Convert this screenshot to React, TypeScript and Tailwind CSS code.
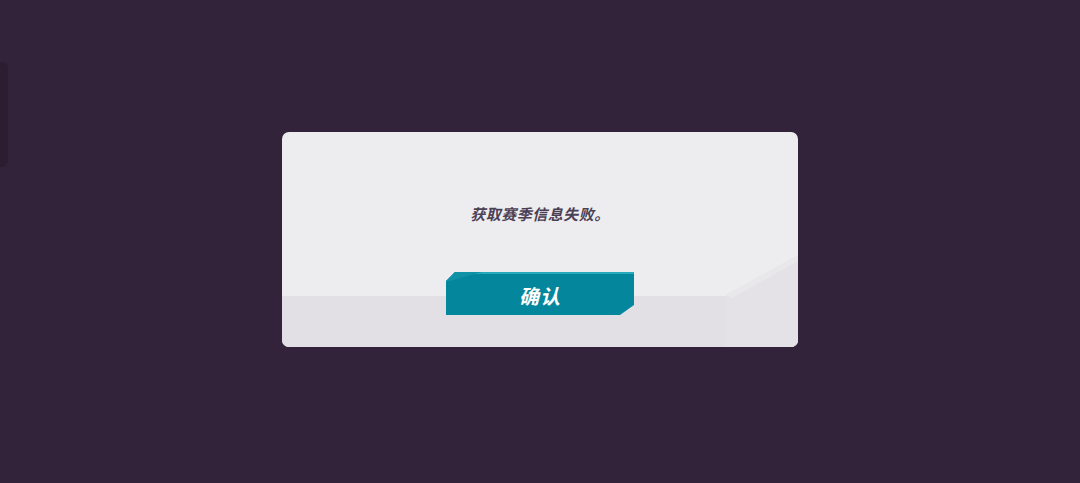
import React from "react";

const FONT = { fontFamily: '"Noto Sans CJK SC", "Noto Sans", sans-serif' };

export default function App() {
  return (
    <div className="relative w-full h-[483px] bg-[#33233a] flex justify-center pt-[132px] overflow-hidden" style={FONT}>
      {/* left side tab */}
      <div className="absolute left-0 top-[62px] w-[8px] h-[105px] rounded-r-[6px] bg-[#2c1d32]" />

      <div className="relative w-[516px] h-[215px] rounded-[7px] bg-[#ededef] overflow-hidden">
        {/* bottom band + corner facet */}
        <div className="absolute left-0 right-0 bottom-0 h-[51px] bg-[#e2e0e4]" />
        <svg className="absolute right-0 bottom-0" width="72" height="92" viewBox="0 0 72 92">
          <polygon points="0,40 72,0 72,92 0,92" fill="#e4e2e6" />
          <polygon points="0,40 72,0 72,6 6,43" fill="#e8e7ea" />
        </svg>

        <div className="relative flex flex-col items-center">
          <p className="mt-[70px] text-[15px] leading-[24px] font-bold italic text-[#4b3f54] tracking-[0.5px]">
            获取赛季信息失败。
          </p>
          <button className="mt-[46px] relative w-[188px] h-[43px] bg-[#04879d] [clip-path:polygon(9px_0,100%_0,100%_calc(100%-10px),calc(100%-14px)_100%,0_100%,0_9px)] flex items-center justify-center">
            <span className="absolute left-0 right-0 top-0 h-[2px] bg-[#27a9bb]" />
            <span className="absolute left-0 top-0 w-[36px] h-[10px] bg-[#0f91a6] [clip-path:polygon(0_0,100%_0,0_100%)]" />
            <span className="relative pt-[4px] text-white text-[20px] font-bold italic tracking-[1px]">确认</span>
          </button>
        </div>
      </div>
    </div>
  );
}
